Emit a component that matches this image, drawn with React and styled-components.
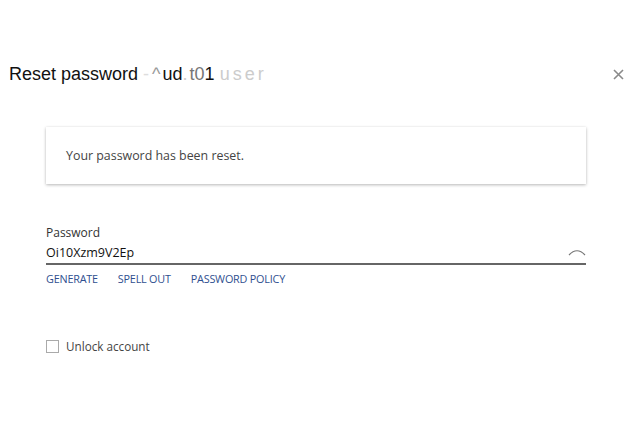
// Libs
import React, { Component } from 'react';
import styled, { createGlobalStyle } from 'styled-components';

const GlobalStyle = createGlobalStyle`
	html, body {
		margin: 0;
		padding: 0;
		background: #FFF;
		font-family: "Open Sans", "Liberation Sans", sans-serif;
		color: #333;
	}
`;

// Styled
const Dialog = styled.div`
	width: 630px;
	height: 430px;
	box-sizing: border-box;
	padding: 60px 0 0 0;
	display: flex;
	flex-direction: column;
`;

const Header = styled.div`
	display: flex;
	align-items: center;
	justify-content: space-between;
	padding: 0 4px 0 9px;
	height: 28px;
`;

const Title = styled.h1`
	margin: 0;
	font-family: "Liberation Sans", Arial, sans-serif;
	font-weight: 400;
	font-size: 18px;
	color: #111;
	white-space: nowrap;
`;

const Masked = styled.span`
	color: ${p => p.tone};
	letter-spacing: ${p => p.spread || 0}px;
`;

const Close = styled.button`
	border: none;
	background: transparent;
	padding: 0;
	width: 16px;
	height: 16px;
	display: flex;
	align-items: center;
	justify-content: center;
	cursor: pointer;
`;

const Body = styled.div`
	padding: 0 44px 0 46px;
	display: flex;
	flex-direction: column;
`;

const Notice = styled.div`
	margin-top: 39px;
	height: 57px;
	background: #FFF;
	box-shadow: 0 1px 3px rgba(0, 0, 0, 0.28), 0 0 1px rgba(0, 0, 0, 0.06);
	display: flex;
	align-items: center;
	padding: 0 20px;
	font-size: 12.4px;
	color: #444;
`;

const Field = styled.div`
	margin-top: 41px;
	display: flex;
	flex-direction: column;
`;

const Label = styled.label`
	font-size: 12px;
	color: #333;
	line-height: 16px;
`;

const InputRow = styled.div`
	display: flex;
	align-items: center;
	border-bottom: 2px solid #666;
	height: 22px;
`;

const Value = styled.input`
	flex: 1;
	border: none;
	outline: none;
	padding: 0;
	font-family: inherit;
	font-size: 12.5px;
	color: #111;
	background: transparent;
`;

const Links = styled.div`
	display: flex;
	gap: 20px;
	margin-top: 6px;
`;

const ActionLink = styled.a`
	font-size: 10.8px;
	color: #2f4f8f;
	text-transform: uppercase;
	letter-spacing: -0.2px;
	text-decoration: none;
	cursor: pointer;
`;

const CheckRow = styled.label`
	display: flex;
	align-items: center;
	gap: 7px;
	margin-top: 52px;
	font-size: 11.7px;
	color: #444;
`;

const Box = styled.span`
	width: 13px;
	height: 13px;
	border: 1px solid #aaa;
	box-sizing: border-box;
	display: inline-block;
`;

export default class App extends Component {
	render() {
		return (
			<Dialog>
				<GlobalStyle />
				<Header>
					<Title>
						Reset password{' '}
						<Masked tone="#ddd" spread={3}>-</Masked>
						<Masked tone="#999" spread={2}>^</Masked>
						<Masked tone="#111">ud</Masked>
						<Masked tone="#ccc" spread={2}>.</Masked>
						<Masked tone="#777">t0</Masked>
						<Masked tone="#111">1</Masked>{' '}
						<Masked tone="#ccc" spread={3}>user</Masked>
					</Title>
					<Close aria-label="Close">
						<svg width="11" height="11" viewBox="0 0 11 11">
							<path d="M1 1L10 10M10 1L1 10" stroke="#8a8a8a" strokeWidth="1.6" />
						</svg>
					</Close>
				</Header>
				<Body>
					<Notice>Your password has been reset.</Notice>
					<Field>
						<Label>Password</Label>
						<InputRow>
							<Value readOnly value="Oi10Xzm9V2Ep" />
							<svg width="18" height="8" viewBox="0 0 18 8">
								<path d="M1 7 Q9 -1.5 17 7" fill="none" stroke="#777" strokeWidth="1.2" />
							</svg>
						</InputRow>
						<Links>
							<ActionLink>Generate</ActionLink>
							<ActionLink>Spell out</ActionLink>
							<ActionLink>Password policy</ActionLink>
						</Links>
					</Field>
					<CheckRow>
						<Box />
						Unlock account
					</CheckRow>
				</Body>
			</Dialog>
		);
	}
}
